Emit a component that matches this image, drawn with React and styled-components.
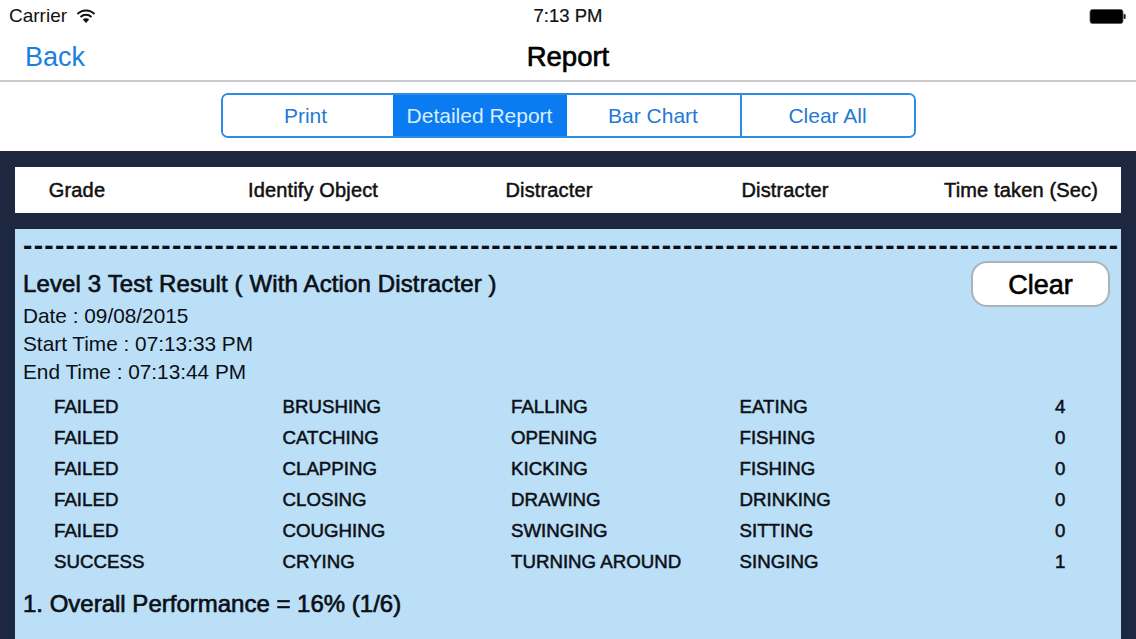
import React from "react";
import styled, { createGlobalStyle } from "styled-components";

const Global = createGlobalStyle`
  html, body { margin: 0; padding: 0; background: #1d2740; }
  body { font-family: "Liberation Sans", Arial, sans-serif; }
`;

const Page = styled.div`
  width: 1136px;
  height: 639px;
  overflow: hidden;
  display: flex;
  flex-direction: column;
  background: #1d2740;
  color: #0b0f16;
`;

const TopArea = styled.header`
  background: #fff;
  display: flex;
  flex-direction: column;
`;

const StatusBar = styled.div`
  height: 32px;
  display: grid;
  grid-template-columns: 1fr auto 1fr;
  align-items: center;
  padding: 0 9px;
  font-size: 19px;
  color: #111;
`;

const StatusLeft = styled.div`
  display: flex;
  align-items: center;
  gap: 9px;
`;

const StatusTime = styled.span`
  font-size: 18.5px;
  -webkit-text-stroke: 0.2px #111;
`;

const StatusRight = styled.div`
  display: flex;
  justify-content: flex-end;
`;

const NavBar = styled.nav`
  height: 48px;
  box-sizing: content-box;
  display: grid;
  grid-template-columns: 1fr auto 1fr;
  align-items: center;
  padding: 0 25px;
  border-bottom: 2px solid #c9c9c9;
`;

const BackLink = styled.span`
  color: #1a80e0;
  font-size: 27px;
  padding-top: 2px;
`;

const NavTitle = styled.h1`
  margin: 0;
  padding-top: 2px;
  font-size: 27.5px;
  font-weight: 400;
  -webkit-text-stroke: 0.65px #000;
  color: #000;
`;

const SegmentRow = styled.div`
  height: 69px;
  padding-top: 11px;
  box-sizing: border-box;
  display: flex;
  justify-content: center;
`;

const Segments = styled.div`
  width: 695px;
  height: 45px;
  box-sizing: border-box;
  display: grid;
  grid-template-columns: 170px 174px 173px 1fr;
  border: 2px solid #2f8ce4;
  border-radius: 7px;
  overflow: hidden;
`;

const Segment = styled.div`
  display: flex;
  align-items: center;
  justify-content: center;
  font-size: 21px;
  color: ${p => (p.$active ? "#d8eeff" : "#1f7ad6")};
  background: ${p => (p.$active ? "#0b7bf2" : "#fff")};
  border-left: ${p => (p.$divider ? "2px solid #2f8ce4" : "none")};
  &:first-child { padding-right: 4px; }
`;

const Content = styled.main`
  flex: 1;
  min-height: 0;
  padding: 16px 15px 0;
  display: flex;
  flex-direction: column;
  gap: 16px;
`;

const TableHeader = styled.div`
  height: 46px;
  flex: none;
  background: #fff;
  display: grid;
  grid-template-columns: repeat(5, 124px);
  column-gap: 112px;
  justify-items: center;
  align-items: center;
  font-size: 20px;
  letter-spacing: 0.15px;
  -webkit-text-stroke: 0.5px #111;
  white-space: nowrap;
  color: #111;
`;

const Panel = styled.section`
  flex: 1;
  background: #bbdff6;
  padding: 0 4px 0 8px;
  overflow: hidden;
`;

const Dashes = styled.div`
  height: 34px;
  line-height: 34px;
  font-size: 28px;
  font-weight: 700;
  letter-spacing: 1.32px;
  white-space: nowrap;
`;

const TitleRow = styled.div`
  display: flex;
  justify-content: space-between;
  align-items: flex-start;
  height: 39px;
`;

const ReportTitle = styled.h2`
  margin: 0;
  padding-top: 6px;
  font-size: 24px;
  line-height: 30px;
  font-weight: 400;
  letter-spacing: 0.13px;
  -webkit-text-stroke: 0.65px #0b0f16;
`;

const ClearButton = styled.div`
  width: 139px;
  height: 46px;
  margin: -2px 7px 0 0;
  padding-top: 2px;
  box-sizing: border-box;
  border: 2px solid #a9b3b9;
  border-radius: 16px;
  background: #fff;
  color: #000;
  display: flex;
  align-items: center;
  justify-content: center;
  font-size: 27px;
  -webkit-text-stroke: 0.6px #000;
`;

const MetaLine = styled.div`
  height: 28px;
  line-height: 28px;
  font-size: 20.8px;
`;

const Rows = styled.div`
  margin-top: 5px;
  padding-left: 31px;
`;

const Row = styled.div`
  height: 31px;
  display: grid;
  grid-template-columns: repeat(4, 228.5px) 1fr;
  align-items: center;
  font-size: 18.7px;
  -webkit-text-stroke: 0.5px #0b0f16;
`;

const TimeCell = styled.span`
  justify-self: end;
  width: 10px;
  margin-right: 52px;
  text-align: center;
`;

const Overall = styled.div`
  margin-top: 12px;
  font-size: 24px;
  line-height: 30px;
  -webkit-text-stroke: 0.65px #0b0f16;
`;

const WifiIcon = () => (
  <svg width="20" height="14" viewBox="0 0 19 14" aria-hidden="true">
    <path d="M1 5 A12 12 0 0 1 18 5" fill="none" stroke="#111" strokeWidth="2" />
    <path d="M4 8 A8 8 0 0 1 15 8" fill="none" stroke="#111" strokeWidth="2" />
    <path d="M9.5 14 L6.3 10.6 A4.6 4.6 0 0 1 12.7 10.6 Z" fill="#111" />
  </svg>
);

const BatteryIcon = () => (
  <svg width="38" height="17" viewBox="0 0 38 17" aria-hidden="true">
    <rect x="1" y="1.5" width="33" height="14" rx="2.5" fill="#000" stroke="#555" strokeWidth="0.8" />
    <rect x="34.6" y="6" width="2" height="5" rx="1" fill="#222" />
  </svg>
);

const columns = ["Grade", "Identify Object", "Distracter", "Distracter", "Time taken (Sec)"];
const rows = [
  ["FAILED", "BRUSHING", "FALLING", "EATING", "4"],
  ["FAILED", "CATCHING", "OPENING", "FISHING", "0"],
  ["FAILED", "CLAPPING", "KICKING", "FISHING", "0"],
  ["FAILED", "CLOSING", "DRAWING", "DRINKING", "0"],
  ["FAILED", "COUGHING", "SWINGING", "SITTING", "0"],
  ["SUCCESS", "CRYING", "TURNING AROUND", "SINGING", "1"],
];
const tabs = ["Print", "Detailed Report", "Bar Chart", "Clear All"];

export default function App() {
  return (
    <Page>
      <Global />
      <TopArea>
        <StatusBar>
          <StatusLeft>Carrier <WifiIcon /></StatusLeft>
          <StatusTime>7:13 PM</StatusTime>
          <StatusRight><BatteryIcon /></StatusRight>
        </StatusBar>
        <NavBar>
          <BackLink>Back</BackLink>
          <NavTitle>Report</NavTitle>
          <span />
        </NavBar>
        <SegmentRow>
          <Segments>
            {tabs.map((t, i) => (
              <Segment key={t} $active={i === 1} $divider={i === 3}>{t}</Segment>
            ))}
          </Segments>
        </SegmentRow>
      </TopArea>
      <Content>
        <TableHeader>
          {columns.map((c, i) => <span key={i}>{c}</span>)}
        </TableHeader>
        <Panel>
          <Dashes>{"-".repeat(103)}</Dashes>
          <TitleRow>
            <ReportTitle>Level 3 Test Result ( With Action Distracter )</ReportTitle>
            <ClearButton>Clear</ClearButton>
          </TitleRow>
          <MetaLine>Date : 09/08/2015</MetaLine>
          <MetaLine>Start Time : 07:13:33 PM</MetaLine>
          <MetaLine>End Time : 07:13:44 PM</MetaLine>
          <Rows>
            {rows.map((r, i) => (
              <Row key={i}>
                <span>{r[0]}</span>
                <span>{r[1]}</span>
                <span>{r[2]}</span>
                <span>{r[3]}</span>
                <TimeCell>{r[4]}</TimeCell>
              </Row>
            ))}
          </Rows>
          <Overall>1. Overall Performance = 16% (1/6)</Overall>
        </Panel>
      </Content>
    </Page>
  );
}
